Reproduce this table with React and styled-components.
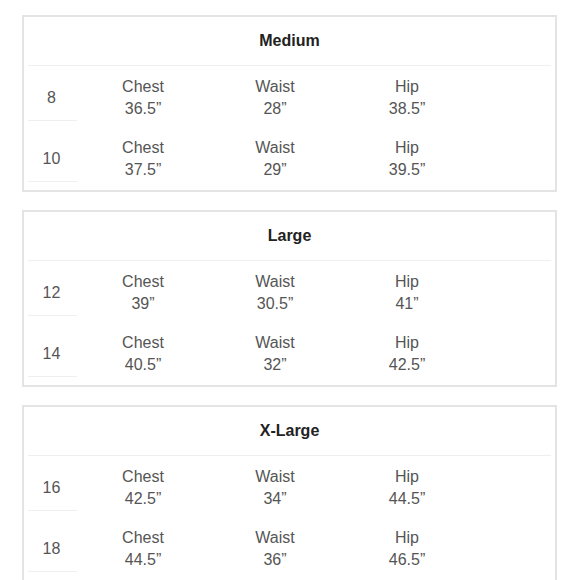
import React from "react";
import styled, { createGlobalStyle } from "styled-components";

const Global = createGlobalStyle`
  html, body { margin: 0; padding: 0; background: #ffffff; }
  body { font-family: "Liberation Sans", Arial, sans-serif; }
`;

const Page = styled.div`
  padding: 15px 22px 0;
  display: flex;
  flex-direction: column;
  gap: 18px;
`;

const Card = styled.section`
  border: 2px solid #e4e4e4;
  padding: 0 4px 2px;
  background: #fff;
`;

const Header = styled.div`
  height: 48px;
  border-bottom: 1px solid #efefef;
  display: flex;
  align-items: center;
  justify-content: center;
  font-size: 16px;
  font-weight: 700;
  color: #222;
  padding-bottom: 1px;
  box-sizing: border-box;
  height: 49px;
`;

const Row = styled.div`
  display: grid;
  grid-template-columns: 49px 132px 132px 132px 1fr;
  align-items: start;
  padding-top: 10px;
  padding-bottom: 6px;
`;

const SizeCell = styled.div`
  display: flex;
  align-items: center;
  justify-content: center;
  padding-right: 2px;
  border-bottom: 1px solid #efefef;
  font-size: 16px;
  color: #555;
  height: 44px;
`;

const MeasureCell = styled.div`
  display: flex;
  flex-direction: column;
  align-items: center;
  font-size: 16px;
  line-height: 22px;
  color: #555;
`;

const data = [
  {
    title: "Medium",
    rows: [
      { size: "8", chest: "36.5", waist: "28", hip: "38.5" },
      { size: "10", chest: "37.5", waist: "29", hip: "39.5" },
    ],
  },
  {
    title: "Large",
    rows: [
      { size: "12", chest: "39", waist: "30.5", hip: "41" },
      { size: "14", chest: "40.5", waist: "32", hip: "42.5" },
    ],
  },
  {
    title: "X-Large",
    rows: [
      { size: "16", chest: "42.5", waist: "34", hip: "44.5" },
      { size: "18", chest: "44.5", waist: "36", hip: "46.5" },
    ],
  },
];

function Measure({ label, value }) {
  return (
    <MeasureCell>
      <span>{label}</span>
      <span>{value}”</span>
    </MeasureCell>
  );
}

export default function App() {
  return (
    <>
      <Global />
      <Page>
        {data.map((group) => (
          <Card key={group.title}>
            <Header>{group.title}</Header>
            {group.rows.map((r) => (
              <Row key={r.size}>
                <SizeCell>{r.size}</SizeCell>
                <Measure label="Chest" value={r.chest} />
                <Measure label="Waist" value={r.waist} />
                <Measure label="Hip" value={r.hip} />
                <div />
              </Row>
            ))}
          </Card>
        ))}
      </Page>
    </>
  );
}
